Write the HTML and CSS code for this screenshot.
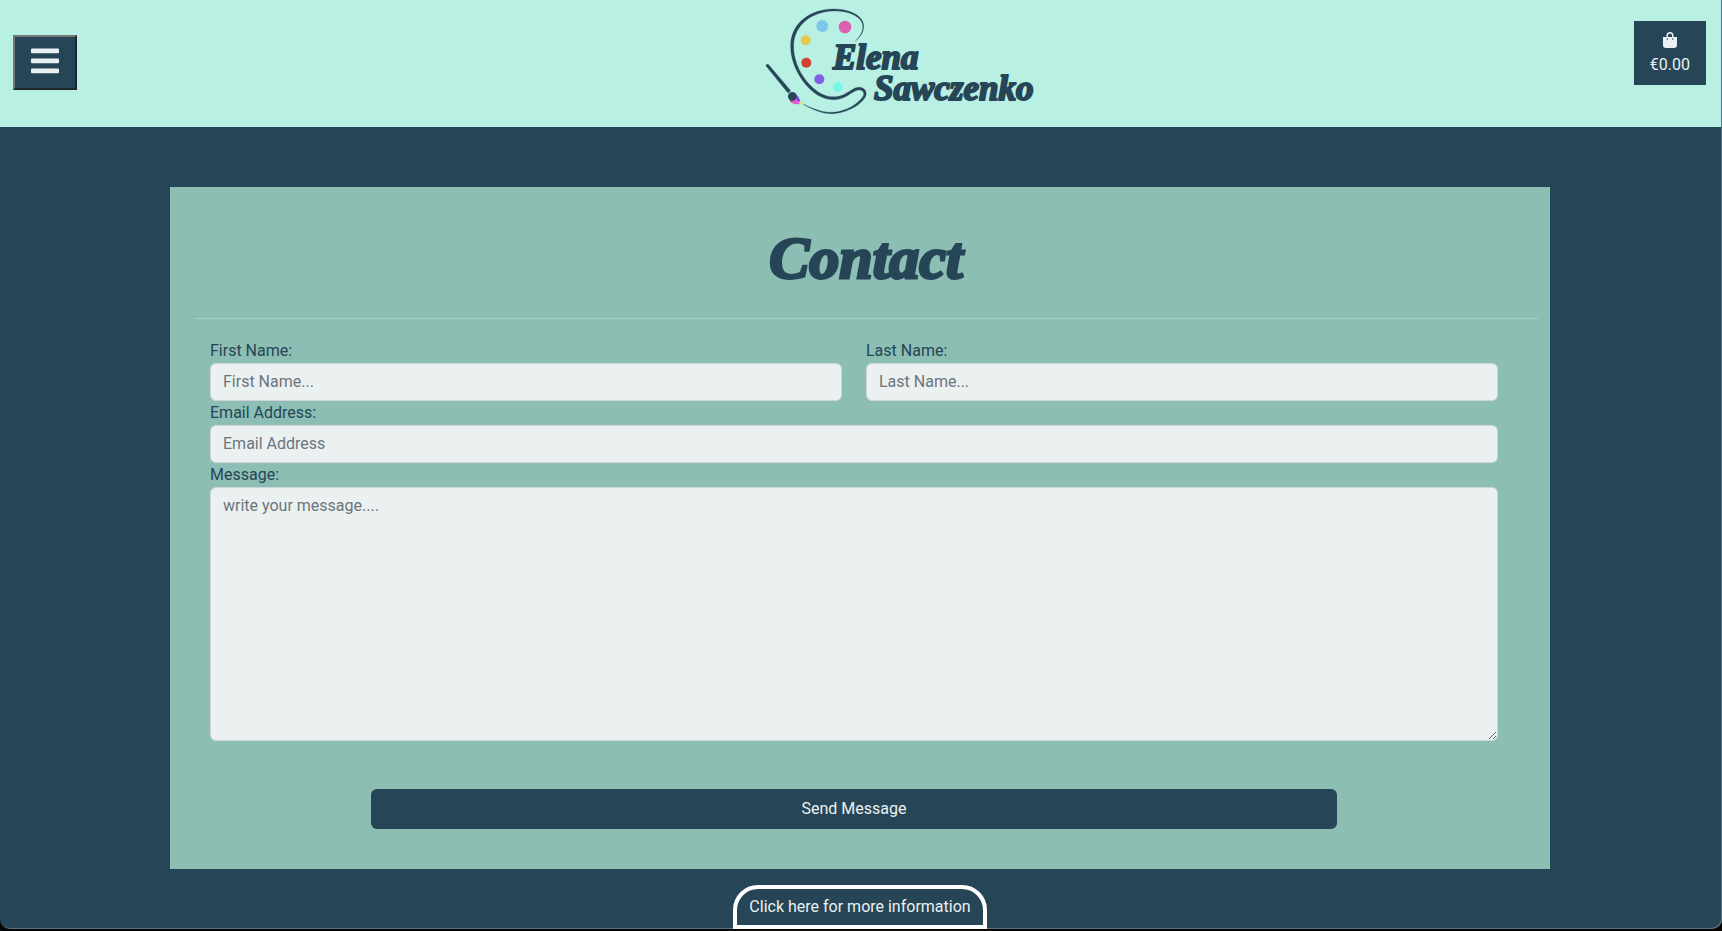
FILE: index.html
```html
<!DOCTYPE html>
<html lang="en">
<head>
<meta charset="utf-8">
<title>Contact - Elena Sawczenko</title>
<link rel="stylesheet" href="styles.css">
</head>
<body>
<div class="page">
  <header class="header">
    <button class="menu-button" type="button" aria-label="Open menu">
      <svg width="28" height="32" viewBox="0 0 448 512" fill="currentColor" aria-hidden="true"><rect x="0" y="56" width="448" height="76" rx="16"/><rect x="0" y="216" width="448" height="76" rx="16"/><rect x="0" y="376" width="448" height="76" rx="16"/></svg>
    </button>
    <a class="logo" href="#" aria-label="Elena Sawczenko home">
      <svg width="350" height="127" viewBox="-195 0 1050 381" role="img">
        <path class="ink outline" d="M316 123 C338 104 347 76 329 57 C309 38 278 32 249 33 C185 35 134 75 131 133 C128 193 166 252 208 278 C235 294 263 294 285 282 C303 272 315 260 331 262 C346 265 352 277 347 289 C334 316 290 338 250 341 C216 342 186 328 159 312 C188 326 216 338 249 337 C287 335 325 312 340 288 C344 280 339 271 330 270 C318 268 306 279 289 289 C261 305 230 301 204 286 C158 257 120 194 122 133 C125 68 181 28 250 27 C283 27 316 36 333 56 C349 77 340 105 316 123Z"/>
        <circle cx="217" cy="78" r="18" fill="#7bc8e8"/>
        <circle cx="285" cy="81" r="19" fill="#dc5fb4"/>
        <circle cx="167" cy="121" r="15" fill="#e5c84f"/>
        <circle cx="169" cy="188" r="15" fill="#d1432d"/>
        <circle cx="208" cy="238" r="15" fill="#8061e6"/>
        <circle cx="264" cy="261" r="15" fill="#78f7e3"/>
        <path class="ink outline" d="M48 196 Q49 190 56 194 L122 272 L114 279 L49 199Z"/>
        <path fill="#dc5fd8" d="M117 294 Q136 282 147 299 L151 311 Q136 315 127 309 Q118 304 117 294Z"/>
        <path fill="#713ff0" d="M137 282 Q148 290 151 307 L141 300Z"/>
        <path fill="#d93567" d="M117 294 L139 299 L125 302 L129 310 Q119 306 117 294Z"/>
        <path fill="#e6e474" d="M148 303 L160 311 L149 315Z"/>
        <circle class="ink" cx="127" cy="289" r="13"/>
        <text class="logo-text" x="249" y="207">Elena</text>
        <text class="logo-text" x="372" y="300">Sawczenko</text>
      </svg>
    </a>
    <a class="bag" href="#">
      <svg width="14" height="16" viewBox="0 0 448 512" fill="currentColor" aria-hidden="true"><path fill-rule="evenodd" d="M112 160v-48a112 112 0 0 1 224 0v48h112v256a96 96 0 0 1-96 96H96a96 96 0 0 1-96-96V160zm48 0h128v-48a64 64 0 0 0-128 0zM136 248a24 24 0 1 0 0-48 24 24 0 0 0 0 48zm176 0a24 24 0 1 0 0-48 24 24 0 0 0 0 48z"/></svg>
      <span>€0.00</span>
    </a>
  </header>
  <div class="content">
    <main class="card">
      <h1 class="title">Contact</h1>
      <hr class="rule">
      <form class="form">
        <div class="names">
          <div class="field"><label for="first">First Name:</label><input class="control" id="first" type="text" placeholder="First Name..."></div>
          <div class="field"><label for="last">Last Name:</label><input class="control" id="last" type="text" placeholder="Last Name..."></div>
        </div>
        <div class="field"><label for="email">Email Address:</label><input class="control" id="email" type="email" placeholder="Email Address"></div>
        <div class="field"><label for="message">Message:</label><textarea class="control" id="message" rows="10" placeholder="write your message...."></textarea></div>
        <button class="send" type="submit">Send Message</button>
      </form>
    </main>
    <button class="info" type="button">Click here for more information</button>
  </div>
</div>
</body>
</html>
```
FILE: styles.css
```css
* { box-sizing: border-box; }
body {
  margin: 0;
  background: #080502;
  color: #264557;
  font: 16px/24px Roboto, sans-serif;
}
.page {
  min-height: calc(100vh - 2px);
  padding-right: 1px;
  background: #264557;
  border-radius: 0 0 10px 10px;
  box-shadow: inset -1px -1px #587483;
}
.header {
  display: grid;
  grid-template-columns: 1fr auto 1fr;
  align-items: start;
  padding: 0 15px 0 13px;
  background: #b8f1e4;
}
.menu-button {
  display: flex;
  justify-content: center;
  justify-self: start;
  width: 64px;
  margin-top: 35px;
  padding: 8px 0 11px;
  border: 2px solid;
  border-color: #767676 #212529 #212529 #767676;
  background: #264557;
  color: #ebf1f2;
}
.logo, .logo svg { display: block; }
.ink { fill: #264557; }
.outline { stroke: #264557; stroke-width: 1px; }
.logo-text {
  fill: #264557;
  stroke: #264557;
  stroke-width: 6px;
  stroke-linejoin: round;
  font: italic bold 105px "Liberation Serif", serif;
}
.bag {
  display: flex;
  flex-direction: column;
  align-items: center;
  justify-self: end;
  gap: 5px;
  margin-top: 21px;
  padding: 11px 16px 8px;
  background: #264557;
  color: #ebf1f2;
  text-decoration: none;
}
.content {
  display: flex;
  flex-direction: column;
  align-items: center;
  padding: 60px 1px 0 0;
}
.card {
  width: 100%;
  max-width: 1380px;
  padding: 36px 12px 40px 24px;
  background: #8cbeb3;
}
.title {
  margin: 0;
  font: italic bold 60px/70px "Liberation Serif", serif;
  text-align: center;
  -webkit-text-stroke: 3px #264557;
}
.rule {
  margin: 25px 0 20px;
  border: 0;
  border-top: 1px solid #a9cdc7;
}
.form {
  display: flex;
  flex-direction: column;
  padding: 0 40px 0 16px;
}
.names {
  display: grid;
  grid-template-columns: 1fr 1fr;
  gap: 24px;
}
.field { display: flex; flex-direction: column; }
.control {
  width: 100%;
  padding: 6px 12px;
  border: 1px solid #ced4da;
  border-radius: 6px;
  background: #ebf1f1;
  color: #264557;
  font: inherit;
}
.control::placeholder { color: #6c757d; opacity: 1; }
textarea.control { resize: vertical; }
.send {
  align-self: center;
  width: 75%;
  margin-top: 48px;
  padding: 8px;
  border: 0;
  border-radius: 6px;
  background: #264557;
  color: #ebf1f1;
  font: inherit;
}
.info {
  margin-top: 16px;
  padding: 6px 12px;
  border: 4px solid #fff;
  border-radius: 25px 25px 0 0;
  background: #264557;
  color: #ebf1f1;
  font: inherit;
}
```
